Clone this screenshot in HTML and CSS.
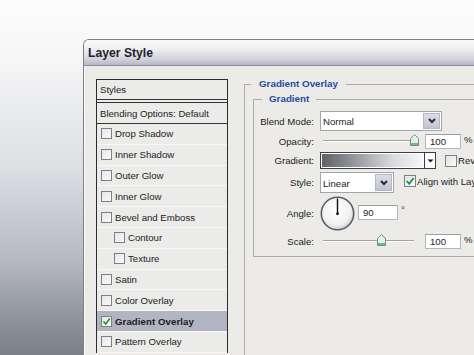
FILE: index.html
```html
<!DOCTYPE html>
<html lang="en">
<head>
  <meta charset="UTF-8">
  <meta name="viewport" content="width=device-width, initial-scale=1.0">
  <title>Layer Style</title>
  <link rel="stylesheet" href="styles.css">
</head>
<body>
  <div class="dialog">
    <div class="titlebar">Layer Style</div>

    <div class="dlg-body">
      <ul class="styles-list">
        <li class="hdr">Styles</li>
        <li class="blend">Blending Options: Default</li>
        <li class="item"><span class="cb"></span>Drop Shadow</li>
        <li class="item"><span class="cb"></span>Inner Shadow</li>
        <li class="item"><span class="cb"></span>Outer Glow</li>
        <li class="item"><span class="cb"></span>Inner Glow</li>
        <li class="item"><span class="cb"></span>Bevel and Emboss</li>
        <li class="item sub"><span class="cb"></span>Contour</li>
        <li class="item sub"><span class="cb"></span>Texture</li>
        <li class="item"><span class="cb"></span>Satin</li>
        <li class="item"><span class="cb"></span>Color Overlay</li>
        <li class="item selected"><span class="cb"><svg width="9" height="9" viewBox="0 0 9 9"><polyline points="1.5,4.5 3.7,7 7.8,1.6" fill="none" stroke="#1f9a2a" stroke-width="1.7"/></svg></span>Gradient Overlay</li>
        <li class="item"><span class="cb"></span>Pattern Overlay</li>
      </ul>

      <fieldset class="group outer">
        <legend>Gradient Overlay</legend>
        <fieldset class="group inner">
          <legend>Gradient</legend>

          <div class="row r-blend">
            <label>Blend Mode:</label>
            <div class="select wide">
              <span class="val">Normal</span>
              <span class="drop"><svg width="10" height="8" viewBox="0 0 10 8"><polyline points="2,2 5,5 8,2" fill="none" stroke="#2a2a3a" stroke-width="2"/></svg></span>
            </div>
          </div>

          <div class="row r-opacity">
            <label>Opacity:</label>
            <div class="slider">
              <div class="track">
                <span class="thumb" style="left: 100%"><svg width="9" height="12" viewBox="0 0 9 12"><path d="M0.5 4.5 L4.5 0.5 L8.5 4.5 V11.5 H0.5 Z" fill="#e4f3e8" stroke="#7a8a82"/><rect x="1" y="9" width="7" height="2" fill="#62c283"/></svg></span>
              </div>
            </div>
            <span class="num">100</span>
            <span class="unit">%</span>
          </div>

          <div class="row r-gradient">
            <label>Gradient:</label>
            <div class="grad-pick">
              <span class="swatch"></span>
              <span class="arrow"><svg width="7" height="4" viewBox="0 0 7 4"><path d="M0.5 0.5 H6.5 L3.5 3.5 Z" fill="#111"/></svg></span>
            </div>
            <span class="cb big reverse"></span>
            <span class="opt">Reverse</span>
          </div>

          <div class="row r-style">
            <label>Style:</label>
            <div class="select narrow">
              <span class="val">Linear</span>
              <span class="drop"><svg width="10" height="8" viewBox="0 0 10 8"><polyline points="2,2 5,5 8,2" fill="none" stroke="#2a2a3a" stroke-width="2"/></svg></span>
            </div>
            <span class="cb big align"><svg width="10" height="10" viewBox="0 0 10 10"><polyline points="1.8,5 4.2,7.8 8.6,2" fill="none" stroke="#1f9a2a" stroke-width="1.8"/></svg></span>
            <span class="opt">Align with Layer</span>
          </div>

          <div class="row r-angle">
            <label>Angle:</label>
            <svg class="dial" width="35" height="35" viewBox="0 0 35 35">
              <defs>
                <radialGradient id="dialfill" cx="0.45" cy="0.4" r="0.6">
                  <stop offset="0" stop-color="#ffffff"/>
                  <stop offset="0.75" stop-color="#f1f1f3"/>
                  <stop offset="1" stop-color="#cfd0d6"/>
                </radialGradient>
              </defs>
              <circle cx="17.5" cy="17.5" r="16.2" fill="url(#dialfill)" stroke="#5d5f66" stroke-width="1.6"/>
              <line x1="17.5" y1="17.5" x2="17.5" y2="2.5" stroke="#111" stroke-width="1.4"/>
              <circle cx="17.5" cy="17.8" r="1.4" fill="#111"/>
            </svg>
            <span class="num angle">90</span>
            <span class="deg">°</span>
          </div>

          <div class="row r-scale">
            <label>Scale:</label>
            <div class="slider">
              <div class="track">
                <span class="thumb" style="left: 64%"><svg width="9" height="12" viewBox="0 0 9 12"><path d="M0.5 4.5 L4.5 0.5 L8.5 4.5 V11.5 H0.5 Z" fill="#e4f3e8" stroke="#7a8a82"/><rect x="1" y="9" width="7" height="2" fill="#62c283"/></svg></span>
              </div>
            </div>
            <span class="num">100</span>
            <span class="unit">%</span>
          </div>
        </fieldset>
      </fieldset>
    </div>
  </div>
</body>
</html>
```

FILE: styles.css
```css
html, body {
  margin: 0;
  height: 100%;
}
body {
  overflow: hidden;
  font-family: 'Liberation Sans', Arial, sans-serif;
  font-size: 9.6px;
  color: #1b1b1b;
  background: linear-gradient(to bottom, #fcfcfc 0, #f6f6f7 60px, #dcdee2 170px, #b6b9c0 260px, #8e929b 320px, #7b7f88 355px);
}

.dialog {
  margin: 39px 0 0 83px;
  width: 420px;
  height: 330px;
  border: 1px solid #7d7f88;
  border-right: 0;
  border-bottom: 0;
  border-radius: 6px 0 0 0;
  background: #ecebe8;
  overflow: hidden;
}
.titlebar {
  height: 25px;
  line-height: 27px;
  padding-left: 4px;
  font-size: 12.2px;
  font-weight: bold;
  color: #23232f;
  border-bottom: 1px solid #8c8c97;
  background: linear-gradient(to bottom, #fafafb 0%, #efeff3 35%, #d4d4de 75%, #b8b8c6 100%);
}
.dlg-body {
  display: flex;
  align-items: flex-start;
  padding: 12px 0 0 11px;
  height: 300px;
  border-left: 1px solid #fbfbfb;
}

/* styles list */
.styles-list {
  flex-shrink: 0;
  list-style: none;
  margin: 1px 0 0 0;
  padding: 0;
  width: 130px;
  border: 1px solid #2c2c2c;
  border-bottom: 0;
  background: #ebebe9;
}
.styles-list li {
  display: flex;
  align-items: center;
  white-space: nowrap;
}
.hdr {
  height: 19px;
  padding-left: 3px;
  border-bottom: 1px solid #333;
}
.blend {
  height: 20px;
  margin-top: 2px;
  padding-left: 3px;
  border-top: 1px solid #333;
  border-bottom: 1px solid #333;
}
.item {
  box-sizing: border-box;
  height: 20.8px;
  padding-left: 4px;
  border-bottom: 1px solid #f7f7f6;
}
.item.sub {
  padding-left: 17px;
}
.item.selected {
  background: #b2b4c2;
  font-weight: bold;
  letter-spacing: 0.1px;
}

.cb {
  box-sizing: border-box;
  flex-shrink: 0;
  display: inline-flex;
  align-items: center;
  justify-content: center;
  width: 11px;
  height: 11px;
  margin-right: 3px;
  border: 1px solid #7c8089;
  background: linear-gradient(135deg, #e4e7ea, #f8f9fa);
}
.cb.big {
  width: 12px;
  height: 12px;
  background: linear-gradient(135deg, #dfe2e6, #fbfbfc);
}

/* group boxes */
.group {
  margin: 0;
  border: 1px solid #acaca8;
  min-width: 0;
}
.group legend {
  line-height: 12px;
  font-size: 9.8px;
  font-weight: bold;
  color: #1f4c9f;
}
.outer {
  flex-shrink: 0;
  margin-left: 16px;
  width: 300px;
  height: 300px;
  padding: 3px 0 0 8px;
}
.outer > legend {
  margin-left: -2px;
  padding: 0 8px;
}
.inner {
  width: 280px;
  padding: 5px 0 6px 0;
}
.inner > legend {
  margin-left: 8px;
  padding: 0 7px;
}

/* control rows */
.row {
  display: flex;
  align-items: center;
  white-space: nowrap;
}
.row > * {
  flex-shrink: 0;
}
.row label {
  width: 60px;
  margin-right: 6px;
  text-align: right;
}
.r-blend { height: 22px; }
.r-opacity { height: 18px; }
.r-gradient { height: 21px; }
.r-style { height: 23px; }
.r-angle { height: 38px; }
.r-scale { height: 18px; }

.select {
  box-sizing: border-box;
  display: flex;
  align-items: stretch;
  border: 1px solid #a3a5ad;
  background: #fff;
}
.select.wide { width: 122px; height: 20px; }
.select.narrow { width: 74px; height: 21px; }
.select .val {
  flex: 1;
  display: flex;
  align-items: center;
  padding-left: 2px;
  padding-top: 1px;
}
.select .drop {
  width: 15px;
  margin: 1px;
  display: flex;
  align-items: center;
  justify-content: center;
  border: 1px solid #b5b7c4;
  background: linear-gradient(to bottom, #dcdde6, #c2c4d1);
}

.slider {
  width: 101px;
  margin-right: 4px;
}
.track {
  position: relative;
  margin-left: 3px;
  width: 91px;
  height: 2px;
  background: linear-gradient(to bottom, #a2a2a2 50%, #ffffff 50%);
}
.thumb {
  position: absolute;
  top: -6px;
  margin-left: -4px;
  line-height: 0;
}

.num {
  box-sizing: border-box;
  width: 36px;
  height: 15px;
  line-height: 14px;
  padding-left: 4px;
  border: 1px solid #b3b6bc;
  border-top-color: #9a9da4;
  background: #fff;
}
.num.angle {
  width: 40px;
  margin-left: 3px;
  margin-top: -1px;
}
.unit {
  margin-left: 3px;
  margin-top: -3px;
}
.deg {
  margin-left: 3px;
  margin-top: -7px;
}

.grad-pick {
  box-sizing: border-box;
  display: flex;
  width: 116px;
  height: 17px;
  border: 1px solid #3d3d44;
  background: #fff;
}
.swatch {
  flex: 1;
  margin: 1px;
  background: linear-gradient(to right, #5f6168 0%, #9a9ca3 35%, #d9dade 70%, #f7f7f9 100%);
}
.grad-pick .arrow {
  width: 10px;
  display: flex;
  align-items: center;
  justify-content: center;
  border-left: 1px solid #3d3d44;
}
.reverse {
  margin-left: 9px;
  margin-right: 1px;
}
.align {
  margin-left: 10px;
  margin-right: 1px;
  margin-top: -3px;
}
.r-style .opt {
  margin-top: -3px;
}
.dial {
  display: block;
}
```
